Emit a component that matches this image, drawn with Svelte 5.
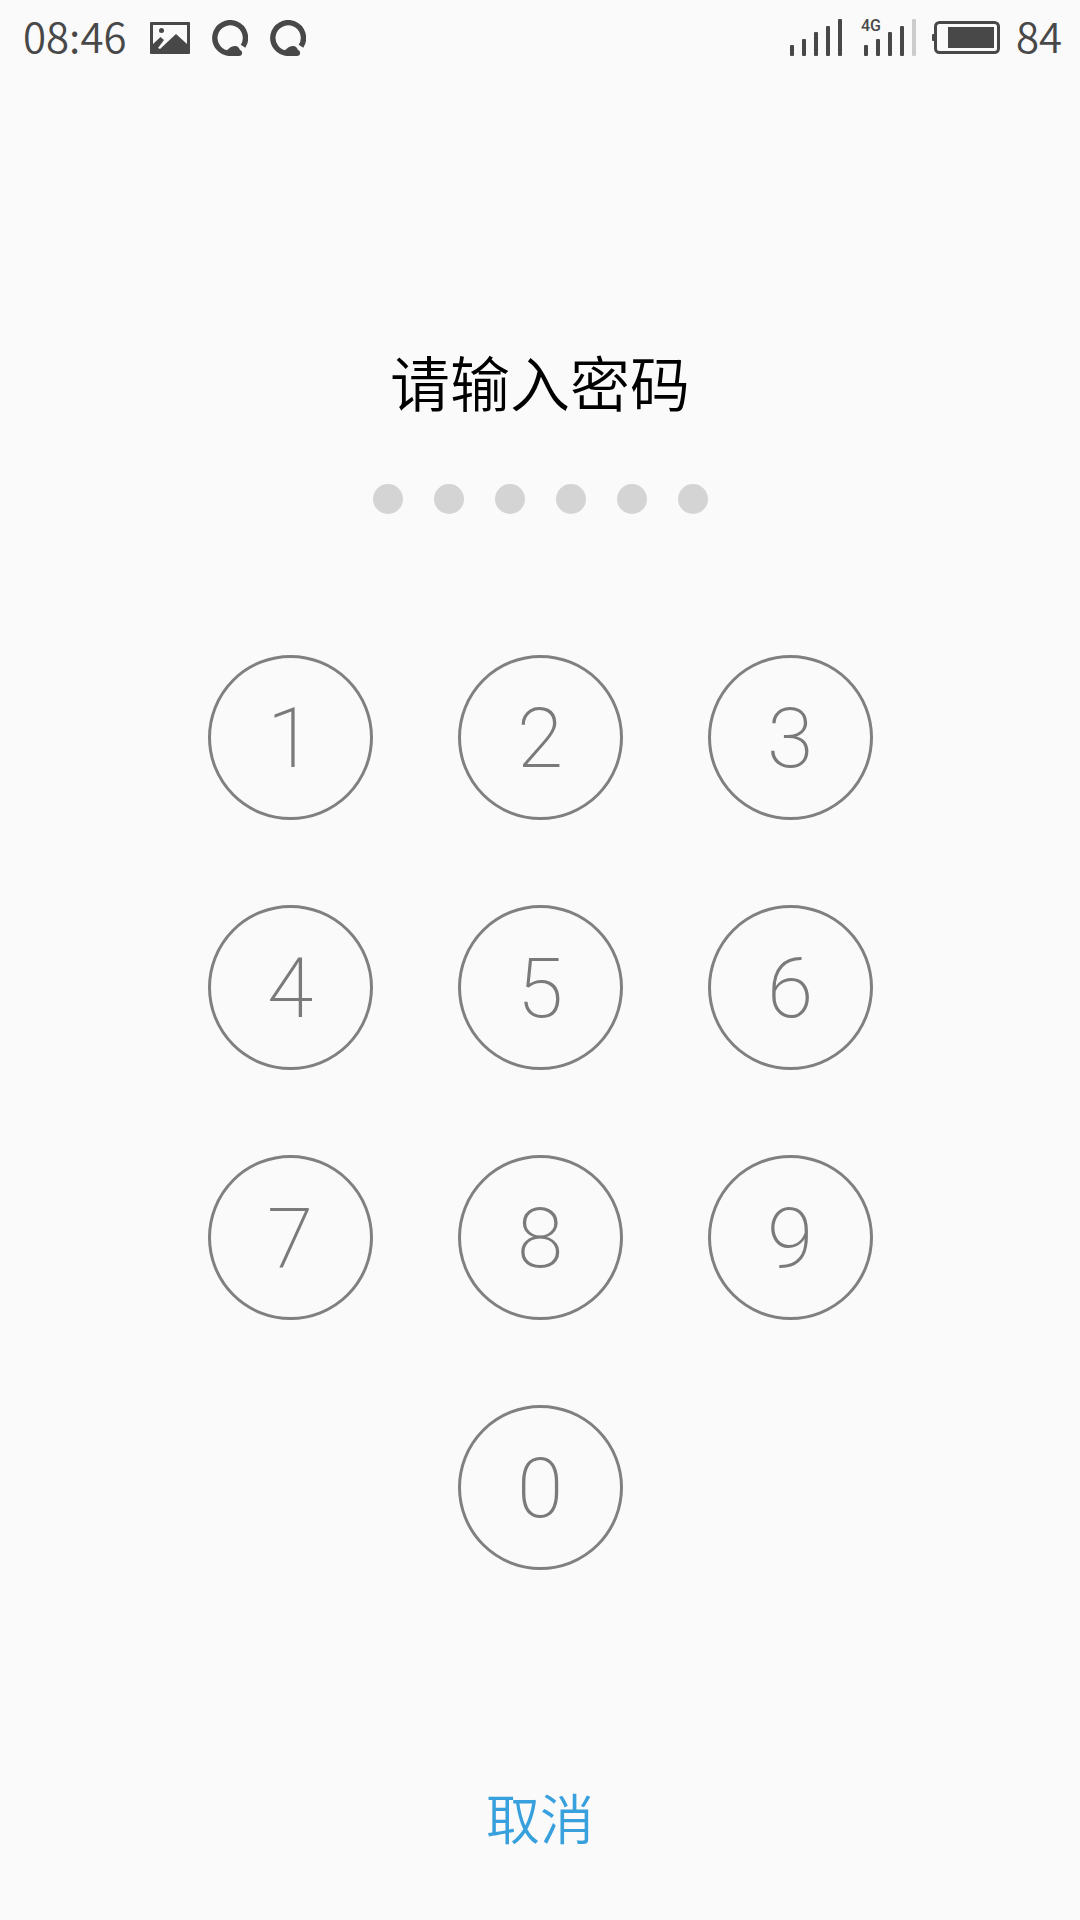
<script>
  const LENGTH = 6;
  const keys = ['1', '2', '3', '4', '5', '6', '7', '8', '9', '0'];

  // top edge of each signal bar, they all end at y=37
  const bars = [26, 20, 13, 7, 0];

  let code = $state('');

  function press(key) {
    if (code.length < LENGTH) code += key;
  }

  function cancel() {
    code = '';
  }
</script>

{#snippet bubble()}
  <svg class="bubble" width="36" height="36" viewBox="0 0 36 36" aria-hidden="true">
    <path
      d="M31 26.300A15.300 15.300 0 1 0 18 33.300"
      fill="none"
      stroke="currentColor"
      stroke-width="5.400"
    />
    <path
      d="M14 31C16 30 18 26 23 26C26 26 27 28 28 30C31 31 31 36 27 36H18C15 36 14 34 14 31Z"
      fill="currentColor"
    />
  </svg>
{/snippet}

{#snippet signal(active)}
  <svg width="52" height="37" viewBox="0 0 52 37" aria-hidden="true">
    {#each bars as top, i}
      <rect class:off={i >= active} x={i * 12} y={top} width="4" height={37 - top} rx="1" fill="currentColor" />
    {/each}
  </svg>
{/snippet}

<div class="screen">
  <header class="status">
    <div class="left">
      <span class="figures">08:46</span>
      <svg class="picture" width="40" height="32" viewBox="0 0 40 32" aria-hidden="true">
        <path
          d="M1 0H39Q40 0 40 1V31Q40 32 39 32H1Q0 32 0 31V1Q0 0 1 0ZM3 3V22L10.500 15L14 18L8 26L10 27L26 12L37 22V3Z"
          fill="currentColor"
          fill-rule="evenodd"
        />
        <circle cx="11.500" cy="8.500" r="2.500" fill="currentColor" />
      </svg>
      {@render bubble()}
      {@render bubble()}
    </div>
    <div class="right">
      {@render signal(5)}
      <span class="mobile">
        {@render signal(4)}
        <span class="network">4G</span>
      </span>
      <svg class="battery" width="68" height="33" viewBox="0 0 68 33" aria-hidden="true">
        <rect x="0" y="13" width="4" height="7" rx="1" fill="currentColor" />
        <rect x="3.500" y="1.500" width="63" height="30" rx="4" fill="none" stroke="currentColor" stroke-width="3" />
        <rect x="16" y="6" width="46" height="21" fill="currentColor" />
      </svg>
      <span class="figures">84</span>
    </div>
  </header>

  <main>
    <h1>请输入密码</h1>
    <div class="dots" role="status" aria-label="{code.length} / {LENGTH}">
      {#each { length: LENGTH } as _, i}
        <span class="dot" class:filled={i < code.length}></span>
      {/each}
    </div>
    <div class="keypad">
      {#each keys as key}
        <button class="key" class:zero={key === '0'} onclick={() => press(key)}>{key}</button>
      {/each}
    </div>
    <button class="cancel" onclick={cancel}>取消</button>
  </main>
</div>

<style>
  :global(body) {
    margin: 0;
    background: #fafafa;
  }

  .screen {
    min-height: 100vh;
    display: flex;
    flex-direction: column;
    font-family: Roboto, 'Noto Sans CJK SC', sans-serif;
  }

  .status {
    display: flex;
    justify-content: space-between;
    height: 75px;
    padding: 0 18px 0 23px;
    color: #484848;
  }

  .figures {
    padding-bottom: 6px;
    font: 350 42px/60px 'Noto Sans CJK SC', sans-serif;
  }

  .left,
  .right {
    display: flex;
    align-items: center;
  }

  .picture {
    margin: 0 22px 0 23px;
  }

  .bubble + .bubble {
    margin-left: 22px;
  }

  .off {
    fill: #cccccc;
  }

  .mobile {
    position: relative;
    display: flex;
    margin: 0 16px 0 22px;
  }

  .network {
    position: absolute;
    top: 0;
    left: -3px;
    font: 500 16px/14px Roboto, sans-serif;
  }

  .battery {
    margin-right: 16px;
  }

  main {
    flex: 1;
    display: flex;
    flex-direction: column;
    align-items: center;
    padding: 262px 24px 63px;
  }

  h1 {
    margin: 0;
    color: #000;
    font: 350 60px/88px 'Noto Sans CJK SC', sans-serif;
  }

  .dots {
    display: flex;
    gap: 31px;
    margin-top: 59px;
  }

  .dot {
    width: 30px;
    height: 30px;
    border-radius: 50%;
    background: #d4d4d4;
  }

  .filled {
    background: #7d7d7d;
  }

  .keypad {
    display: grid;
    grid-template-columns: repeat(3, 165px);
    gap: 85px;
    margin-top: 141px;
  }

  .key {
    height: 165px;
    padding: 2px 0 0;
    border: 3px solid #808080;
    border-radius: 50%;
    background: none;
    color: #7a7a7a;
    font: 200 84px/100px Roboto, sans-serif;
  }

  .zero {
    grid-column: 2;
  }

  .cancel {
    margin-top: auto;
    padding: 0;
    border: 0;
    background: none;
    color: #38a0dc;
    font: 350 54px/80px 'Noto Sans CJK SC', sans-serif;
  }
</style>
